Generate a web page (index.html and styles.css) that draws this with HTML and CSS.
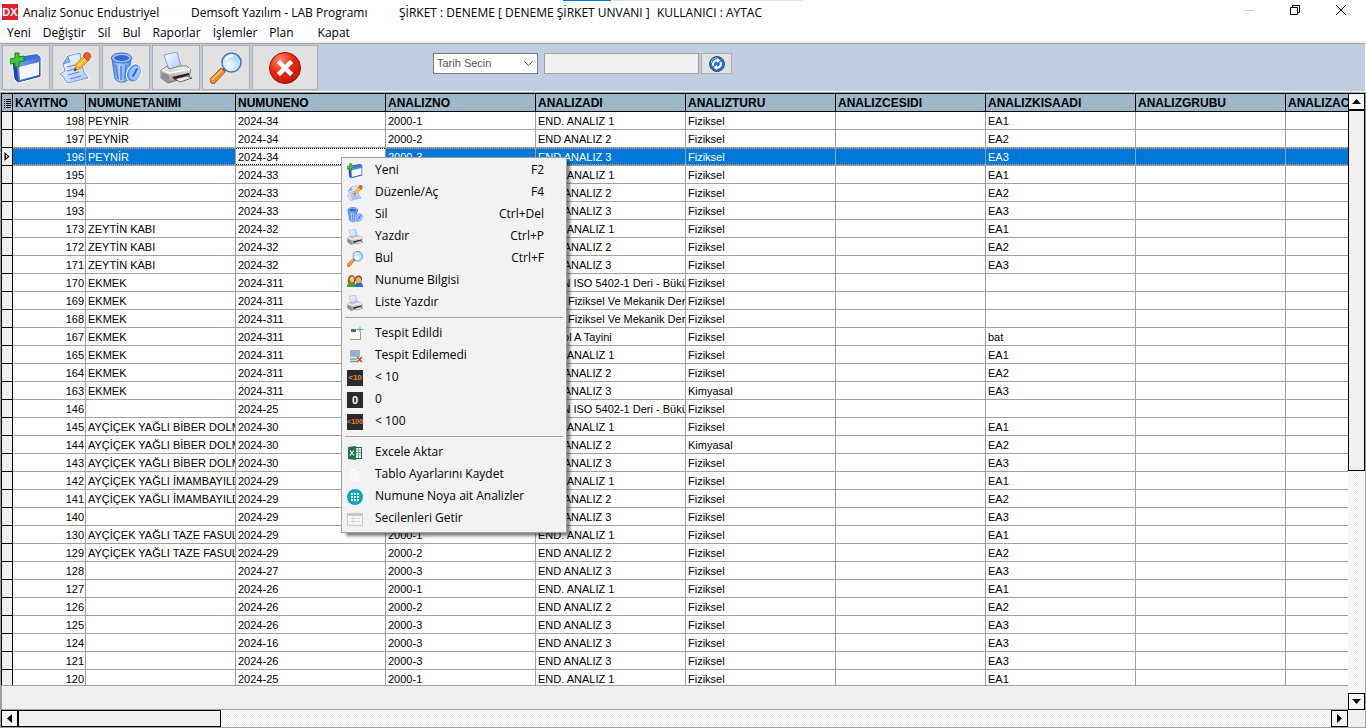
FILE: index.html
```
<!DOCTYPE html>
<html lang="tr">
<head>
  <meta charset="UTF-8" />
  <meta name="viewport" content="width=device-width, initial-scale=1.0"/>
  <title>Analiz Sonuc Endustriyel</title>
  <link rel="stylesheet" href="styles.css">
</head>
<body>
  <svg class="sprite" aria-hidden="true">
    <defs>
      <linearGradient id="blueDeep" x1="0" y1="0" x2="1" y2="1"><stop offset="0" stop-color="#7fabf5"/><stop offset="1" stop-color="#1a48bd"/></linearGradient>
      <linearGradient id="blueSoft" x1="0" y1="0" x2="1" y2="0"><stop offset="0" stop-color="#4a80e6"/><stop offset=".4" stop-color="#b5d4ff"/><stop offset="1" stop-color="#4f88ea"/></linearGradient>
      <linearGradient id="paper" x1="0" y1="0" x2="1" y2="1"><stop offset="0" stop-color="#fff"/><stop offset="1" stop-color="#a4c6fb"/></linearGradient>
      <linearGradient id="metal" x1="0" y1="0" x2="0" y2="1"><stop offset="0" stop-color="#f4f4f4"/><stop offset="1" stop-color="#8e8e96"/></linearGradient>
      <radialGradient id="lens" cx=".4" cy=".65" r=".65"><stop offset="0" stop-color="#fff"/><stop offset="1" stop-color="#8ed0f8"/></radialGradient>
      <radialGradient id="redBall" cx=".35" cy=".25" r=".8"><stop offset="0" stop-color="#ff8a70"/><stop offset=".5" stop-color="#ec2c12"/><stop offset="1" stop-color="#bd1404"/></radialGradient>
    </defs>
    <symbol id="i-new" viewBox="0 0 32 32">
      <path d="M2 10 L8 5 L27 2 L31 5 V25 L8 31 L4 27 Z" fill="#1a45b5" stroke="#fff" stroke-width="1"/>
      <path d="M3 9 L8 5 L27 2 L30 5 L7 11 Z" fill="#3b70dd"/>
      <path d="M7 11 L30 5 V24 L8 30 Z" fill="url(#blueDeep)"/>
      <path d="M9 15 L29 10 V23 L10 28 Z" fill="#f1f6ff"/>
      <path d="M5 1 H9 V5 L14 4 V9 L9 10 V15 H5 V11 L0 12 V7 L5 6 Z" fill="#43c52f" stroke="#17821a" stroke-width="1"/>
    </symbol>
    <symbol id="i-edit" viewBox="0 0 32 32">
      <path d="M8 4 L20 1 L22 14 Q24 22 28 26 L8 31 Q5 30 3 24 L0 22 L5 19 L3 12 Z" fill="url(#paper)" stroke="#fff" stroke-width="2"/>
      <path d="M8 4 L20 1 L22 14 Q24 22 28 26 L8 31 Q5 30 3 24 L0 22 L5 19 L3 12 Z" fill="url(#paper)" stroke="#5b82d5" stroke-width=".8"/>
      <path d="M8 4 L10 10 L3 12 Z" fill="#8ab4f5" stroke="#5b82d5" stroke-width=".7"/>
      <path d="M7 15 L15 13 M7 19 L14 17 M8 23 L19 20 M10 27 L21 24" stroke="#5c84db" stroke-width="1.200"/>
      <path d="M14 19 L16 12 L24 4 L29 8 L21 16 Z" fill="#ffb81f" stroke="#d0711b" stroke-width=".8"/>
      <path d="M18 14 L26 6" stroke="#ffe477" stroke-width="1.500"/>
      <path d="M23 4 L25 1 Q30 -1 31 5 L28 9 Z" fill="#ec5838" stroke="#b83018" stroke-width=".7"/>
      <path d="M14 19 L15 16 L17 18 Z" fill="#333"/>
    </symbol>
    <symbol id="i-trash" viewBox="0 0 32 32">
      <path d="M2 7 L5 27 Q11 33 18 28 L21 7 Z" fill="url(#blueSoft)" stroke="#2f62cc" stroke-width=".8"/>
      <path d="M6 13 L8 27 M11 14 V28 M16 13 L15 27" stroke="#4a80e0" stroke-width="1.500"/>
      <ellipse cx="11.500" cy="6" rx="10" ry="5" fill="#9cc2ff" stroke="#2f60c7" stroke-width="1"/>
      <ellipse cx="11.500" cy="6" rx="7.500" ry="3" fill="#3a68c8"/>
      <ellipse cx="24" cy="21" rx="7" ry="9.500" transform="rotate(25 24 21)" fill="#5d90ec" stroke="#fff" stroke-width="1"/>
      <ellipse cx="25" cy="21" rx="5.500" ry="7.500" transform="rotate(25 25 21)" fill="#9cc2ff"/>
      <path d="M23 24 L27 17" stroke="#3567cf" stroke-width="2" stroke-linecap="round"/>
    </symbol>
    <symbol id="i-print" viewBox="0 0 32 32">
      <path d="M4 3 L17 0 L21 14 L9 18 Z" fill="url(#paper)" stroke="#6e8fd0" stroke-width=".8"/>
      <path d="M1 18 L7 14 L9 17 L20 14 L27 14 L31 18 L29 25 L8 31 L1 26 Z" fill="url(#metal)" stroke="#66666e" stroke-width=".8"/>
      <path d="M2 18 L10 21 L30 17" fill="none" stroke="#fff" stroke-width="1.500"/>
      <path d="M2 20 L9 23 V29 L2 26 Z" fill="#8b8b93"/>
      <path d="M12 25 L29 21 V23 L15 28 Z" fill="#222"/>
      <path d="M15 27 L27 24 L32 26 L20 30 Z" fill="#eee" stroke="#444" stroke-width=".8"/>
    </symbol>
    <symbol id="i-find" viewBox="0 0 32 32">
      <path d="M1 31 L0 27 L11 16 L15 20 L4 32 Z" fill="#f08c20" stroke="#8a4c1a" stroke-width=".8"/>
      <path d="M2 28 L12 18" stroke="#ffc877" stroke-width="1.400"/>
      <path d="M12 17 L15 14 L18 17 L15 20 Z" fill="#667"/>
      <circle cx="21.500" cy="10.500" r="9.500" fill="url(#lens)" stroke="#4b78b8" stroke-width="1.600"/>
      <circle cx="21.500" cy="10.500" r="7.800" fill="none" stroke="#d8f0ff" stroke-width="1"/>
      <path d="M16 8 Q18 4 23 4" fill="none" stroke="#fff" stroke-width="2"/>
    </symbol>
    <symbol id="i-close" viewBox="0 0 32 32">
      <circle cx="16" cy="16" r="15.500" fill="url(#redBall)" stroke="#9c1206" stroke-width="1"/>
      <path d="M11 11 L21 21 M21 11 L11 21" stroke="#fff" stroke-width="4.500" stroke-linecap="square"/>
    </symbol>
    <symbol id="i-users" viewBox="0 0 16 16">
      <path d="M0 14 Q0 9 4 9 Q9 9 9 14 Z" fill="#45a32d"/>
      <path d="M1 10 Q0 2 5 2 Q9 2 8 10 Z" fill="#a65e10"/>
      <ellipse cx="5" cy="6.500" rx="2" ry="3" fill="#fbc887"/>
      <path d="M8 14 Q8 9 12 9 Q16 9 16 14 Z" fill="#2e6fc8"/>
      <circle cx="11.500" cy="6" r="3.500" fill="#8b4a18"/>
      <ellipse cx="11.500" cy="7" rx="2.500" ry="3" fill="#f6b070"/>
    </symbol>
    <symbol id="i-found" viewBox="0 0 16 16">
      <rect x="3" y="2" width="11" height="12" fill="#fafafa"/>
      <path d="M3 13.500 H13.500 V6" fill="none" stroke="#999"/>
      <rect x="4" y="3" width="5" height="3" fill="#3470b2"/>
      <path d="M13 1 V6 M10 3.500 H16" stroke="#56a08a"/>
    </symbol>
    <symbol id="i-missing" viewBox="0 0 16 16">
      <rect x="3" y="2" width="9" height="7" fill="#8db5dc"/>
      <path d="M3 11 H10 M3 13.500 H10" stroke="#79a38f" stroke-width="1.500"/>
      <path d="M12.500 2 V9" stroke="#aaa"/>
      <path d="M10 9 L15 14 M15 9 L10 14" stroke="#cf4630" stroke-width="1.500"/>
    </symbol>
    <symbol id="i-excel" viewBox="0 0 16 16">
      <rect x="8" y="2.500" width="6.500" height="11" fill="#fff" stroke="#1f7347"/>
      <path d="M9 5 H14 M9 7.500 H14 M9 10 H14 M11.500 3 V13" stroke="#7fb295"/>
      <path d="M1 2 L9 1 V15 L1 14 Z" fill="#1f7347"/>
      <path d="M3 5.500 L7 10.500 M7 5.500 L3 10.500" stroke="#fff" stroke-width="1.200"/>
    </symbol>
    <symbol id="i-page" viewBox="0 0 16 16">
      <path d="M2 1 H10 L13 4 V15 H2 Z" fill="#f8f8f8" stroke="#e8e8e8" stroke-width=".5"/>
      <path d="M10 1 V4 H13 Z" fill="#e2e2e2"/>
    </symbol>
    <symbol id="i-dots" viewBox="0 0 16 16">
      <circle cx="8" cy="8" r="8" fill="#08a5c0"/>
      <path d="M4 5 H12 M4 8 H12 M4 11 H12" stroke="#fff" stroke-width="2" stroke-dasharray="2 1"/>
    </symbol>
    <symbol id="i-form" viewBox="0 0 16 16">
      <rect x=".5" y="2.500" width="15" height="12" fill="#f6f6f6" stroke="#c6c9cd"/>
      <path d="M1 4 H15" stroke="#c2c8d1" stroke-width="2"/>
      <path d="M3 7.500 H13 M3 10.500 H13 M6 6 V13" stroke="#d6d6d6"/>
    </symbol>
    <symbol id="i-sync" viewBox="0 0 16 16">
      <circle cx="8" cy="8" r="7.500" fill="#2b6fbc" stroke="#1e5090"/>
      <path d="M2 7 Q3 2 8 2" fill="none" stroke="#8ebdea" stroke-width="1"/>
      <path d="M4.500 10 A4 4 0 0 1 8 4.200 M11.500 6 A4 4 0 0 1 8 11.800" fill="none" stroke="#fff" stroke-width="2"/>
      <path d="M8 2 L11.500 4.500 L8 7 Z M8 9 L4.500 11.500 L8 14 Z" fill="#fff"/>
    </symbol>
  </svg>

  <header class="titlebar">
    <span class="app-logo">DX</span>
    <h1>Analiz Sonuc Endustriyel</h1>
    <span>Demsoft Yazılım - LAB Programı</span>
    <span>ŞİRKET : DENEME [ DENEME ŞİRKET UNVANI ]</span>
    <span>KULLANICI : AYTAC</span>
    <div class="window-buttons">
      <button type="button" aria-label="Küçült" disabled><svg viewBox="0 0 10 10"><path d="M0 5.500 H10" stroke="#ccc"/></svg></button>
      <button type="button" aria-label="Geri yükle"><svg viewBox="0 0 10 10"><path d="M.5 2.500 H7.500 V9.500 H.5 Z M2.500 2.500 V.5 H9.500 V7.500 H7.500" fill="none" stroke="#000"/></svg></button>
      <button type="button" aria-label="Kapat"><svg viewBox="0 0 10 10"><path d="M0 0 L10 10 M10 0 L0 10" stroke="#000"/></svg></button>
    </div>
  </header>
  <div class="load-strip"></div>

  <nav class="menubar" aria-label="Ana menü">
    <a href="#">Yeni</a>
    <a href="#">Değiştir</a>
    <a href="#">Sil</a>
    <a href="#">Bul</a>
    <a href="#">Raporlar</a>
    <a href="#">İşlemler</a>
    <a href="#">Plan</a>
    <a href="#" class="exit">Kapat</a>
  </nav>

  <div class="toolbar">
    <button type="button" class="tool" aria-label="Yeni"><svg><use href="#i-new"/></svg></button>
    <button type="button" class="tool" aria-label="Düzenle"><svg><use href="#i-edit"/></svg></button>
    <button type="button" class="tool" aria-label="Sil"><svg><use href="#i-trash"/></svg></button>
    <button type="button" class="tool" aria-label="Yazdır"><svg><use href="#i-print"/></svg></button>
    <button type="button" class="tool" aria-label="Bul"><svg><use href="#i-find"/></svg></button>
    <button type="button" class="tool tool-wide" aria-label="Kapat"><svg><use href="#i-close"/></svg></button>
    <form class="filter">
      <select aria-label="Tarih"><option>Tarih Secin</option></select>
      <input type="text" aria-label="Filtre" />
      <button type="button" aria-label="Yenile"><svg><use href="#i-sync"/></svg></button>
    </form>
  </div>

  <main class="grid">
    <div class="grid-body">
      <div class="rows">
        <table>
          <colgroup><col class="c-mark"><col class="c-id"><col span="9" class="c-data"></colgroup>
          <thead>
            <tr><th><svg class="list-mark" viewBox="0 0 7 9"><path d="M0 .5H1M2 .5H7M0 2.500H1M2 2.500H7M0 4.500H1M2 4.500H7M0 6.500H1M2 6.500H7M0 8.500H1M2 8.500H7" stroke="#000"/></svg></th><th>KAYITNO</th><th>NUMUNETANIMI</th><th>NUMUNENO</th><th>ANALIZNO</th><th>ANALIZADI</th><th>ANALIZTURU</th><th>ANALIZCESIDI</th><th>ANALIZKISAADI</th><th>ANALIZGRUBU</th><th>ANALIZAC</th></tr>
          </thead>
          <tbody>
            <tr><td></td><td>198</td><td>PEYNİR</td><td>2024-34</td><td>2000-1</td><td>END. ANALIZ 1</td><td>Fiziksel</td><td></td><td>EA1</td><td></td><td></td></tr>
            <tr><td></td><td>197</td><td>PEYNİR</td><td>2024-34</td><td>2000-2</td><td>END ANALIZ 2</td><td>Fiziksel</td><td></td><td>EA2</td><td></td><td></td></tr>
            <tr class="selected"><td><svg class="row-mark" viewBox="0 0 6 9"><path d="M.5 0 V9 L5.500 4.500 Z M2 3 V6 L4 4.500 Z" fill="#000" fill-rule="evenodd"/></svg></td><td>196</td><td>PEYNİR</td><td class="focused">2024-34</td><td>2000-3</td><td>END ANALIZ 3</td><td>Fiziksel</td><td></td><td>EA3</td><td></td><td></td></tr>
            <tr><td></td><td>195</td><td></td><td>2024-33</td><td>2000-1</td><td>END. ANALIZ 1</td><td>Fiziksel</td><td></td><td>EA1</td><td></td><td></td></tr>
            <tr><td></td><td>194</td><td></td><td>2024-33</td><td>2000-2</td><td>END ANALIZ 2</td><td>Fiziksel</td><td></td><td>EA2</td><td></td><td></td></tr>
            <tr><td></td><td>193</td><td></td><td>2024-33</td><td>2000-3</td><td>END ANALIZ 3</td><td>Fiziksel</td><td></td><td>EA3</td><td></td><td></td></tr>
            <tr><td></td><td>173</td><td>ZEYTİN KABI</td><td>2024-32</td><td>2000-1</td><td>END. ANALIZ 1</td><td>Fiziksel</td><td></td><td>EA1</td><td></td><td></td></tr>
            <tr><td></td><td>172</td><td>ZEYTİN KABI</td><td>2024-32</td><td>2000-2</td><td>END ANALIZ 2</td><td>Fiziksel</td><td></td><td>EA2</td><td></td><td></td></tr>
            <tr><td></td><td>171</td><td>ZEYTİN KABI</td><td>2024-32</td><td>2000-3</td><td>END ANALIZ 3</td><td>Fiziksel</td><td></td><td>EA3</td><td></td><td></td></tr>
            <tr><td></td><td>170</td><td>EKMEK</td><td>2024-311</td><td></td><td>TS EN ISO 5402-1 Deri - Bükülme</td><td>Fiziksel</td><td></td><td></td><td></td><td></td></tr>
            <tr><td></td><td>169</td><td>EKMEK</td><td>2024-311</td><td></td><td>Deri - Fiziksel Ve Mekanik Deneyler</td><td>Fiziksel</td><td></td><td></td><td></td><td></td></tr>
            <tr><td></td><td>168</td><td>EKMEK</td><td>2024-311</td><td></td><td>Deri - Fiziksel Ve Mekanik Deneyler</td><td>Fiziksel</td><td></td><td></td><td></td><td></td></tr>
            <tr><td></td><td>167</td><td>EKMEK</td><td>2024-311</td><td></td><td>Bifenol A Tayini</td><td>Fiziksel</td><td></td><td>bat</td><td></td><td></td></tr>
            <tr><td></td><td>165</td><td>EKMEK</td><td>2024-311</td><td>2000-1</td><td>END. ANALIZ 1</td><td>Fiziksel</td><td></td><td>EA1</td><td></td><td></td></tr>
            <tr><td></td><td>164</td><td>EKMEK</td><td>2024-311</td><td>2000-2</td><td>END ANALIZ 2</td><td>Fiziksel</td><td></td><td>EA2</td><td></td><td></td></tr>
            <tr><td></td><td>163</td><td>EKMEK</td><td>2024-311</td><td>2000-3</td><td>END ANALIZ 3</td><td>Kimyasal</td><td></td><td>EA3</td><td></td><td></td></tr>
            <tr><td></td><td>146</td><td></td><td>2024-25</td><td></td><td>TS EN ISO 5402-1 Deri - Bükülme</td><td>Fiziksel</td><td></td><td></td><td></td><td></td></tr>
            <tr><td></td><td>145</td><td>AYÇİÇEK YAĞLI BİBER DOLMA</td><td>2024-30</td><td>2000-1</td><td>END. ANALIZ 1</td><td>Fiziksel</td><td></td><td>EA1</td><td></td><td></td></tr>
            <tr><td></td><td>144</td><td>AYÇİÇEK YAĞLI BİBER DOLMA</td><td>2024-30</td><td>2000-2</td><td>END ANALIZ 2</td><td>Kimyasal</td><td></td><td>EA2</td><td></td><td></td></tr>
            <tr><td></td><td>143</td><td>AYÇİÇEK YAĞLI BİBER DOLMA</td><td>2024-30</td><td>2000-3</td><td>END ANALIZ 3</td><td>Fiziksel</td><td></td><td>EA3</td><td></td><td></td></tr>
            <tr><td></td><td>142</td><td>AYÇİÇEK YAĞLI İMAMBAYILDI</td><td>2024-29</td><td>2000-1</td><td>END. ANALIZ 1</td><td>Fiziksel</td><td></td><td>EA1</td><td></td><td></td></tr>
            <tr><td></td><td>141</td><td>AYÇİÇEK YAĞLI İMAMBAYILDI</td><td>2024-29</td><td>2000-2</td><td>END ANALIZ 2</td><td>Fiziksel</td><td></td><td>EA2</td><td></td><td></td></tr>
            <tr><td></td><td>140</td><td></td><td>2024-29</td><td>2000-3</td><td>END ANALIZ 3</td><td>Fiziksel</td><td></td><td>EA3</td><td></td><td></td></tr>
            <tr><td></td><td>130</td><td>AYÇİÇEK YAĞLI TAZE FASULYE</td><td>2024-29</td><td>2000-1</td><td>END. ANALIZ 1</td><td>Fiziksel</td><td></td><td>EA1</td><td></td><td></td></tr>
            <tr><td></td><td>129</td><td>AYÇİÇEK YAĞLI TAZE FASULYE</td><td>2024-29</td><td>2000-2</td><td>END ANALIZ 2</td><td>Fiziksel</td><td></td><td>EA2</td><td></td><td></td></tr>
            <tr><td></td><td>128</td><td></td><td>2024-27</td><td>2000-3</td><td>END ANALIZ 3</td><td>Fiziksel</td><td></td><td>EA3</td><td></td><td></td></tr>
            <tr><td></td><td>127</td><td></td><td>2024-26</td><td>2000-1</td><td>END. ANALIZ 1</td><td>Fiziksel</td><td></td><td>EA1</td><td></td><td></td></tr>
            <tr><td></td><td>126</td><td></td><td>2024-26</td><td>2000-2</td><td>END ANALIZ 2</td><td>Fiziksel</td><td></td><td>EA2</td><td></td><td></td></tr>
            <tr><td></td><td>125</td><td></td><td>2024-26</td><td>2000-3</td><td>END ANALIZ 3</td><td>Fiziksel</td><td></td><td>EA3</td><td></td><td></td></tr>
            <tr><td></td><td>124</td><td></td><td>2024-16</td><td>2000-3</td><td>END ANALIZ 3</td><td>Fiziksel</td><td></td><td>EA3</td><td></td><td></td></tr>
            <tr><td></td><td>121</td><td></td><td>2024-26</td><td>2000-3</td><td>END ANALIZ 3</td><td>Fiziksel</td><td></td><td>EA3</td><td></td><td></td></tr>
            <tr><td></td><td>120</td><td></td><td>2024-25</td><td>2000-1</td><td>END. ANALIZ 1</td><td>Fiziksel</td><td></td><td>EA1</td><td></td><td></td></tr>
          </tbody>
        </table>
      </div>
      <div class="grid-footer"></div>
    </div>
    <div class="scroll scroll-v">
      <button type="button" aria-label="Yukarı"><svg viewBox="0 0 9 9"><path d="M0 7 L4.500 2 L9 7 Z"/></svg></button>
      <div class="track"><div class="thumb"></div></div>
      <button type="button" aria-label="Aşağı"><svg viewBox="0 0 9 9"><path d="M0 2 L4.500 7 L9 2 Z"/></svg></button>
    </div>
    <div class="scroll scroll-h">
      <button type="button" aria-label="Sola"><svg viewBox="0 0 9 9"><path d="M7 0 L2 4.500 L7 9 Z"/></svg></button>
      <div class="track"><div class="thumb"></div></div>
      <button type="button" aria-label="Sağa"><svg viewBox="0 0 9 9"><path d="M2 0 L7 4.500 L2 9 Z"/></svg></button>
    </div>
  </main>

  <div class="context-menu" role="menu">
    <button type="button" role="menuitem"><svg><use href="#i-new"/></svg><span>Yeni</span><kbd>F2</kbd></button>
    <button type="button" role="menuitem"><svg><use href="#i-edit"/></svg><span>Düzenle/Aç</span><kbd>F4</kbd></button>
    <button type="button" role="menuitem"><svg><use href="#i-trash"/></svg><span>Sil</span><kbd>Ctrl+Del</kbd></button>
    <button type="button" role="menuitem"><svg><use href="#i-print"/></svg><span>Yazdır</span><kbd>Ctrl+P</kbd></button>
    <button type="button" role="menuitem"><svg><use href="#i-find"/></svg><span>Bul</span><kbd>Ctrl+F</kbd></button>
    <button type="button" role="menuitem"><svg><use href="#i-users"/></svg><span>Nunume Bilgisi</span></button>
    <button type="button" role="menuitem"><svg><use href="#i-print"/></svg><span>Liste Yazdır</span></button>
    <hr>
    <button type="button" role="menuitem"><svg><use href="#i-found"/></svg><span>Tespit Edildi</span></button>
    <button type="button" role="menuitem"><svg><use href="#i-missing"/></svg><span>Tespit Edilemedi</span></button>
    <button type="button" role="menuitem"><i class="badge">&lt;10</i><span>&lt; 10</span></button>
    <button type="button" role="menuitem"><i class="badge badge-zero">0</i><span>0</span></button>
    <button type="button" role="menuitem"><i class="badge badge-small">&lt;100</i><span>&lt; 100</span></button>
    <hr>
    <button type="button" role="menuitem"><svg><use href="#i-excel"/></svg><span>Excele Aktar</span></button>
    <button type="button" role="menuitem"><svg><use href="#i-page"/></svg><span>Tablo Ayarlarını Kaydet</span></button>
    <button type="button" role="menuitem"><svg><use href="#i-dots"/></svg><span>Numune Noya ait Analizler</span></button>
    <button type="button" role="menuitem"><svg><use href="#i-form"/></svg><span>Secilenleri Getir</span></button>
  </div>
</body>
</html>
```
FILE: styles.css
```
:root {
  --ui: "Open Sans", "Noto Sans", sans-serif;
  --sys: "Liberation Sans", Arial, sans-serif;
  --line: #a0a0a0; --face: #f0f0f0; --bar: #c0cce0; --head: #9db8c7; --select: #0078d7;
}
* { box-sizing: border-box; }
body { margin: 0; height: 100vh; display: flex; flex-direction: column; overflow: hidden; background: #fff; color: #000; font-family: var(--ui); font-size: 12px; }
button { padding: 0; margin: 0; font: inherit; color: inherit; cursor: pointer; }
.sprite { position: absolute; width: 0; height: 0; }

/* Title bar */
.titlebar { display: grid; grid-template-columns: 16px 163px 203px 253px auto 1fr; column-gap: 5px; align-items: center; height: 24px; padding-left: 2px; white-space: nowrap; }
.titlebar h1 { margin: 0; font-size: 12px; font-weight: 400; }
.app-logo { width: 16px; height: 16px; background: #e0202a; color: #fff; font: bold 11px/16px var(--sys); text-align: center; overflow: hidden; }
.window-buttons { display: flex; justify-content: flex-end; align-self: start; padding-right: 2px; }
.window-buttons button { width: 46px; height: 20px; border: 0; background: none; display: flex; align-items: center; justify-content: center; }
.window-buttons svg { width: 10px; height: 10px; }
.load-strip { position: absolute; top: 0; left: 563px; width: 240px; height: 1px; background: linear-gradient(90deg, var(--select) 48px, #e2e2e2 48px); }

/* Menu bar */
.menubar { display: flex; gap: 12px; height: 19px; padding-left: 7px; line-height: 17px; border-bottom: 2px solid var(--face); flex-shrink: 0; }
.menubar a { color: inherit; text-decoration: none; }
.menubar .exit { margin-left: 12px; }

/* Toolbar */
.toolbar { display: flex; gap: 2px; padding: 1px 2px; background: var(--bar); border-top: 1px solid var(--line); margin-right: 1px; flex-shrink: 0; }
.tool { width: 48px; height: 45px; border: 1px solid #adadad; background: #e1e1e1; display: flex; align-items: center; justify-content: center; }
.tool svg { width: 32px; height: 32px; }
.tool-wide { width: 66px; }
.filter { display: flex; margin: 8px 0 0 113px; height: 21px; }
.filter select { width: 105px; padding: 0 4px 2px 3px; border: 1px solid #7a7a7a; border-radius: 0; color: #555; font: 11px var(--sys); appearance: none;
  background: #fff url("data:image/svg+xml;charset=UTF-8,%3csvg xmlns='http://www.w3.org/2000/svg' viewBox='0 0 9 5' fill='none' stroke='%23555'%3e%3cpath d='M.5 .5 L4.500 4.500 L8.500 .5'/%3e%3c/svg%3e") no-repeat right 4px center / 9px 5px; }
.filter input { width: 155px; margin: 0 2px 0 6px; border: 1px solid var(--line); background: var(--face); }
.filter button { width: 31px; border: 1px solid #adadad; background: #e1e1e1; display: flex; align-items: center; justify-content: center; }
.filter svg { width: 16px; height: 16px; }

/* Data grid */
.grid { flex: 1; min-height: 0; display: grid; grid-template-columns: minmax(0, 1fr) 17px; grid-template-rows: minmax(0, 1fr) 17px; margin-top: 1px; border: 1px solid var(--line); background: var(--face); }
.grid-body { display: flex; flex-direction: column; min-height: 0; }
.rows { flex: 1; min-height: 0; overflow: hidden; border-left: 1px solid #000; }
.grid-footer { height: 25px; flex-shrink: 0; border: 1px solid var(--line); border-width: 1px 0 1px 1px; }
table { width: 1434px; table-layout: fixed; border-collapse: separate; border-spacing: 0; font: 11px/16px var(--sys); }
.c-mark { width: 11px; }
.c-id { width: 73px; }
.c-data { width: 150px; }
th, td { height: 18px; padding: 1px 2px 0; border: 0 solid var(--line); border-width: 0 1px 1px 0; background-color: #fff; text-align: left; white-space: nowrap; overflow: hidden; }
th { height: 19px; padding: 1px 0 0 2px; border-color: #000; border-top-width: 1px; background: var(--head); font-size: 12px; font-weight: bold; line-height: 16px; }
td:first-child { padding: 0 2px; border-color: #000; background: var(--face); }
td:nth-child(2) { padding-right: 1px; text-align: right; }
.list-mark { display: block; width: 7px; height: 9px; }
.row-mark { display: block; width: 6px; height: 9px; }
.selected td:not(:first-child) { --dots: #d59a68; color: #fff; background-color: var(--select); background-clip: padding-box;
  background-image: repeating-linear-gradient(90deg, var(--dots) 0 1px, transparent 1px 2px), repeating-linear-gradient(90deg, var(--dots) 0 1px, transparent 1px 2px);
  background-size: 100% 1px; background-position: 0 0, 0 100%; background-repeat: no-repeat; }
.selected td.focused:not(:first-child) { --dots: #000; color: #000; background-color: #fff; }

/* Scroll bars */
.scroll { display: flex; }
.scroll-v { flex-direction: column; }
.scroll button { width: 17px; height: 17px; border: 1px solid #000; background: #f5f5f5; display: flex; align-items: center; justify-content: center; flex-shrink: 0; }
.scroll svg { width: 9px; height: 9px; }
.track { flex: 1; background: repeating-conic-gradient(#fff 0 25%, #efefef 0 50%) 0 0 / 2px 2px; }
.thumb { border: 1px solid #000; background: var(--face); }
.scroll-v .thumb { height: 62%; }
.scroll-h .thumb { width: 203px; height: 100%; }

/* Context menu */
.context-menu { position: absolute; top: 157px; left: 341px; width: 226px; padding: 2px; background: #f2f2f2; border: 1px solid var(--line); box-shadow: 4px 4px 3px -1px rgba(0,0,0,0.5); }
.context-menu button { display: flex; align-items: center; width: 100%; height: 22px; padding: 0 20px 0 3px; border: 0; background: none; text-align: left; line-height: 16px; }
.context-menu svg, .badge { width: 16px; height: 16px; margin-right: 12px; flex-shrink: 0; }
.context-menu span { flex: 1; }
.context-menu span, .context-menu kbd { padding-bottom: 2px; }
.context-menu kbd { font: inherit; }
.context-menu hr { height: 2px; margin: 3px 1px 4px; border: 0; border-top: 1px solid var(--line); border-bottom: 1px solid #fff; }
.badge { background: #2b2b2b; color: #f08030; font: bold 8px/16px var(--sys); text-align: center; overflow: hidden; }
.badge-zero { color: #fff; font-size: 11px; }
.badge-small { font-size: 7px; }
```
